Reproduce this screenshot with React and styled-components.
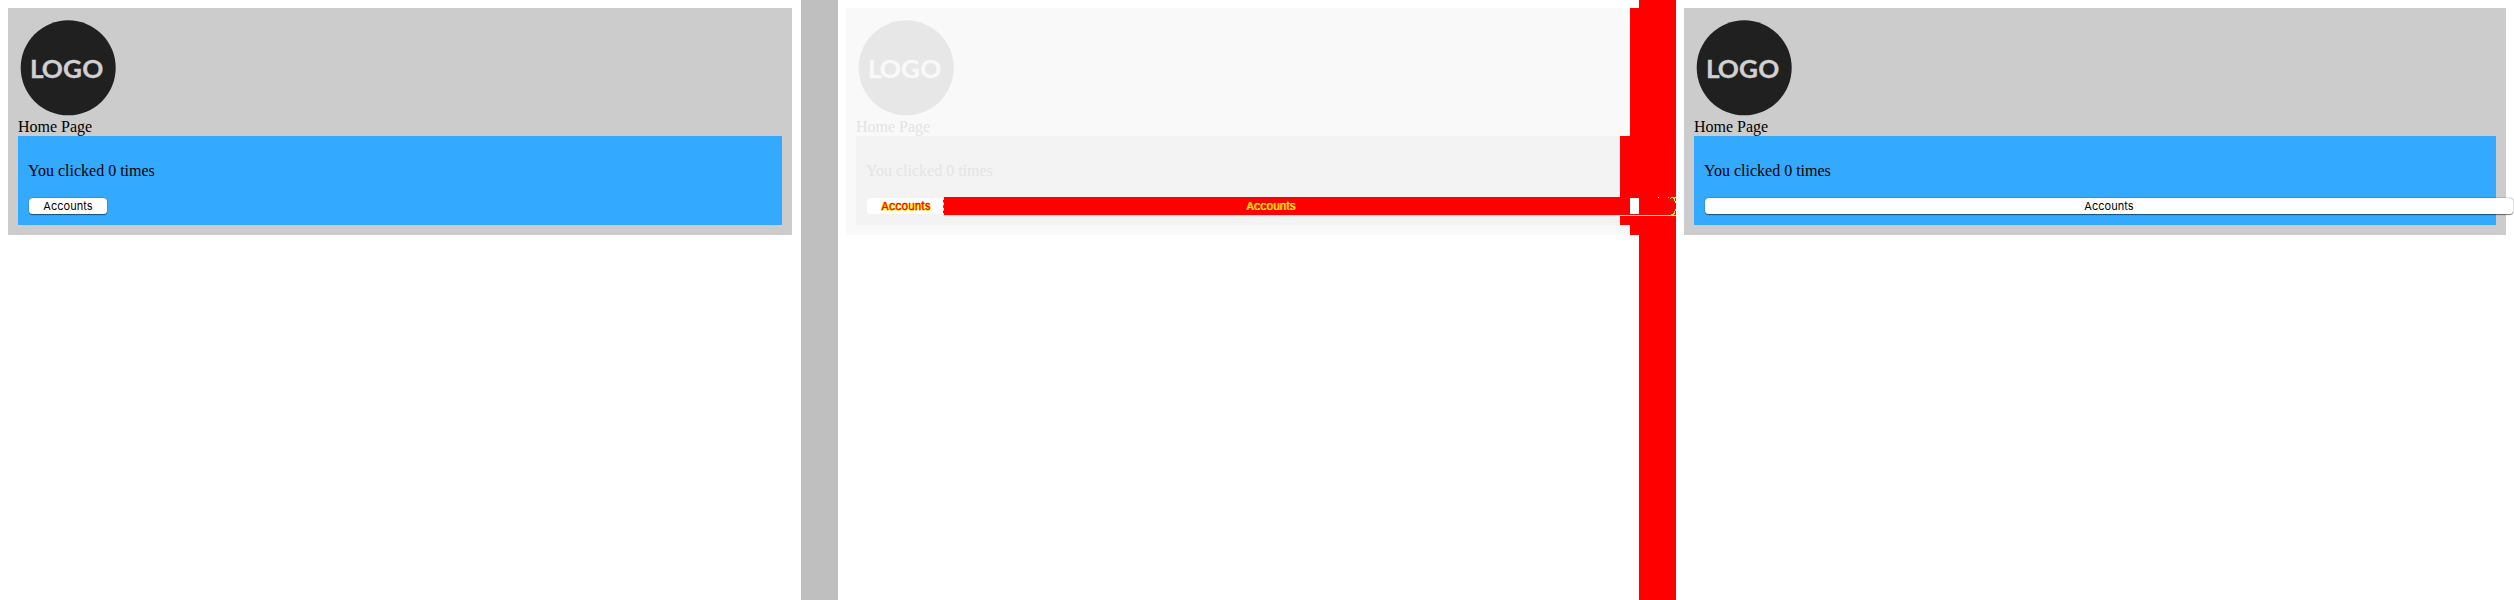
import React from "react";
import styled, { createGlobalStyle } from "styled-components";

const GlobalStyle = createGlobalStyle`
  body {
    margin: 0;
    background: #fff;
    overflow: hidden;
    font: 16px/18px "Liberation Serif", serif;
    color: #000;
  }
`;

const Comparison = styled.main`
  display: grid;
  grid-template-columns: repeat(3, 838px);
  height: 600px;
`;

const Pane = styled.section`
  display: flex;
  position: relative;
  min-width: 0;
`;

const Page = styled.div`
  flex: 1;
  min-width: 0;
  padding: 8px ${(p) => p.$right}px 8px 8px;
`;

const Gutter = styled.div`
  flex: none;
  width: 37px;
  background: ${(p) => p.$color};
`;

const Card = styled.div`
  display: flow-root;
  height: 227px;
  box-sizing: border-box;
  padding: 10px;
  background: ${(p) => (p.$faded ? "#f9f9f9" : "#ccc")};
  color: ${(p) => (p.$faded ? "#e4e4e4" : "#000")};
  box-shadow: ${(p) => (p.$faded ? "9px 0 #f00" : "none")};
`;

const LogoSvg = styled.svg`
  display: block;
  width: 100px;
  height: 100px;
`;

const LogoText = styled.text`
  font: 700 25.6px Lato, sans-serif;
  stroke-width: 0.3px;
`;

const Counter = styled.div`
  height: 89px;
  box-sizing: border-box;
  padding: 26px 10px 0;
  background: ${(p) => (p.$faded ? "#f3f3f3" : "#3af")};
  box-shadow: ${(p) => (p.$faded ? "10px 0 #f00" : "none")};
`;

const Message = styled.p`
  margin: 0 0 18px;
`;

const Button = styled.button`
  display: block;
  width: ${(p) => p.$width};
  height: 16px;
  margin: 0 0 0 1px;
  padding: 0;
  border: 0;
  border-radius: 3.5px;
  background: #fff;
  box-shadow: 0 0 0 0.5px rgba(0, 0, 0, 0.15), 0 0.5px 1px rgba(0, 0, 0, 0.5);
  color: #000;
  font: 11px/16px Inter, sans-serif;
  letter-spacing: 0.05px;
  text-align: center;
`;

const DiffRow = styled.div`
  display: flex;
  position: absolute;
  left: 28px;
  top: 197px;
  width: 810px;
  height: 19px;
  font: 11px/18px Inter, sans-serif;
  letter-spacing: 0.05px;
`;

const DiffButton = styled.span`
  width: 78px;
  height: 16px;
  margin: 1px 0 0 1px;
  border-radius: 3.5px;
  background: #fff;
  color: #f00;
  line-height: 16px;
  text-align: center;
  -webkit-text-stroke: 0.3px #f00;
  text-shadow: -1px 0 #ff0, 1px 0 #ff0, 0 1px #ff0;
`;

const DiffStrip = styled.span`
  flex: 1;
  box-sizing: border-box;
  margin-left: -2px;
  padding-left: 302px;
  border-bottom: 1px solid #ff0;
  border-left: 1px dashed #ff0;
  background: linear-gradient(#fff, #fff) 686px 1px / 9px 16px no-repeat #f00;
  color: #ff0;
  text-shadow: 1px 0 rgba(255, 255, 0, 0.6);
`;

const StripEnd = styled.svg`
  position: absolute;
  right: 0;
  top: 0;
  width: 20px;
  height: 19px;
`;

function Logo({ faded }) {
  const ink = faded ? "#f9f9f9" : "#d0d0d0";
  return (
    <LogoSvg viewBox="0 0 100 100">
      <circle cx="50.2" cy="49.8" r="47.5" fill={faded ? "#e7e7e7" : "#202020"} />
      <LogoText
        x="11.7 23.4 44 63"
        y="60"
        transform="scale(1.02 1)"
        fill={ink}
        stroke={ink}
      >
        LOGO
      </LogoText>
    </LogoSvg>
  );
}

function HomePage({ faded, buttonWidth }) {
  return (
    <Card $faded={faded}>
      <Logo faded={faded} />
      <div>Home Page</div>
      <Counter $faded={faded}>
        <Message>You clicked 0 times</Message>
        {buttonWidth && <Button $width={buttonWidth}>Accounts</Button>}
      </Counter>
    </Card>
  );
}

export default function App() {
  return (
    <>
      <GlobalStyle />
      <Comparison>
        <Pane>
          <Page $right={9}>
            <HomePage buttonWidth="78px" />
          </Page>
          <Gutter $color="#bfbfbf" />
        </Pane>
        <Pane>
          <Page $right={9}>
            <HomePage faded />
          </Page>
          <Gutter $color="#f00" />
          <DiffRow>
            <DiffButton>Accounts</DiffButton>
            <DiffStrip>Accounts</DiffStrip>
            <StripEnd viewBox="0 0 20 19" shapeRendering="crispEdges">
              <path
                d="M2 0h1v1H2zM12 0h1v1h-1zM15 0h5v1h-5zM14 1h1v1h-1zM17 1h2v1h-2zM18 2h1v2h-1zM19 4h1v2h-1zM19 12h1v2h-1zM18 14h1v2h-1zM17 16h2v1h-2zM15 17h3v1h-3z"
                fill="#ff0"
              />
            </StripEnd>
          </DiffRow>
        </Pane>
        <Pane>
          <Page $right={8}>
            <HomePage buttonWidth="808px" />
          </Page>
        </Pane>
      </Comparison>
    </>
  );
}
